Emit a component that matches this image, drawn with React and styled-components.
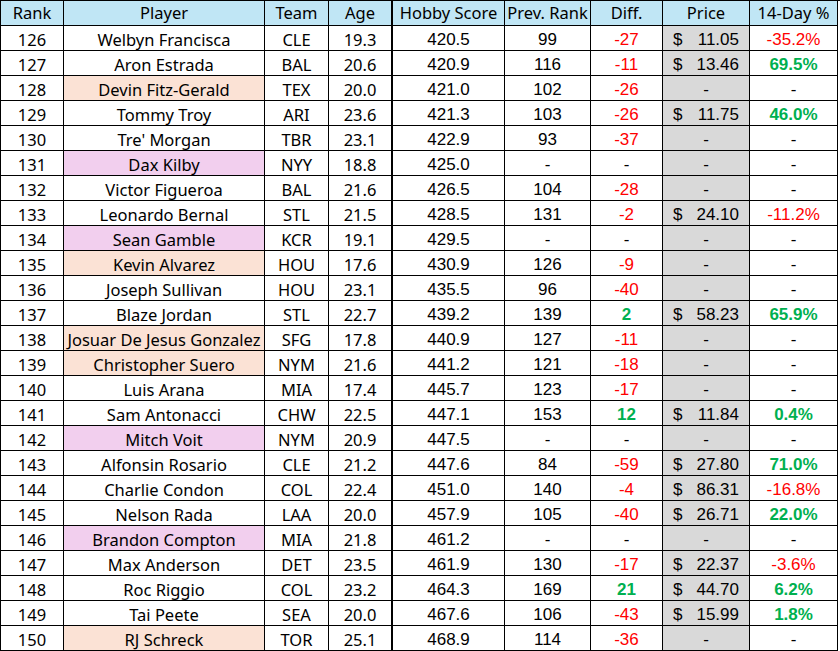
import React from "react";
import styled, { createGlobalStyle } from "styled-components";

const GlobalStyle = createGlobalStyle`
  body {
    margin: 0;
    background: #ffffff;
  }
`;

// rank, player, fill, team, age, hobby score, prev rank, diff, price, 14-day
const rows = [
  [126, "Welbyn Francisca", "", "CLE", "19.3", "420.5", "99", -27, "11.05", "-35.2%"],
  [127, "Aron Estrada", "", "BAL", "20.6", "420.9", "116", -11, "13.46", "69.5%"],
  [128, "Devin Fitz-Gerald", "orange", "TEX", "20.0", "421.0", "102", -26, null, null],
  [129, "Tommy Troy", "", "ARI", "23.6", "421.3", "103", -26, "11.75", "46.0%"],
  [130, "Tre' Morgan", "", "TBR", "23.1", "422.9", "93", -37, null, null],
  [131, "Dax Kilby", "purple", "NYY", "18.8", "425.0", null, null, null, null],
  [132, "Victor Figueroa", "", "BAL", "21.6", "426.5", "104", -28, null, null],
  [133, "Leonardo Bernal", "", "STL", "21.5", "428.5", "131", -2, "24.10", "-11.2%"],
  [134, "Sean Gamble", "purple", "KCR", "19.1", "429.5", null, null, null, null],
  [135, "Kevin Alvarez", "orange", "HOU", "17.6", "430.9", "126", -9, null, null],
  [136, "Joseph Sullivan", "", "HOU", "23.1", "435.5", "96", -40, null, null],
  [137, "Blaze Jordan", "", "STL", "22.7", "439.2", "139", 2, "58.23", "65.9%"],
  [138, "Josuar De Jesus Gonzalez", "orange", "SFG", "17.8", "440.9", "127", -11, null, null],
  [139, "Christopher Suero", "orange", "NYM", "21.6", "441.2", "121", -18, null, null],
  [140, "Luis Arana", "", "MIA", "17.4", "445.7", "123", -17, null, null],
  [141, "Sam Antonacci", "", "CHW", "22.5", "447.1", "153", 12, "11.84", "0.4%"],
  [142, "Mitch Voit", "purple", "NYM", "20.9", "447.5", null, null, null, null],
  [143, "Alfonsin Rosario", "", "CLE", "21.2", "447.6", "84", -59, "27.80", "71.0%"],
  [144, "Charlie Condon", "", "COL", "22.4", "451.0", "140", -4, "86.31", "-16.8%"],
  [145, "Nelson Rada", "", "LAA", "20.0", "457.9", "105", -40, "26.71", "22.0%"],
  [146, "Brandon Compton", "purple", "MIA", "21.8", "461.2", null, null, null, null],
  [147, "Max Anderson", "", "DET", "23.5", "461.9", "130", -17, "22.37", "-3.6%"],
  [148, "Roc Riggio", "", "COL", "23.2", "464.3", "169", 21, "44.70", "6.2%"],
  [149, "Tai Peete", "", "SEA", "20.0", "467.6", "106", -43, "15.99", "1.8%"],
  [150, "RJ Schreck", "orange", "TOR", "25.1", "468.9", "114", -36, null, null],
];

const headers = ["Rank", "Player", "Team", "Age", "Hobby Score", "Prev. Rank", "Diff.", "Price", "14-Day %"];

const fills = {
  orange: "#fbe2d5",
  purple: "#f2cfee",
  header: "#c0e6f5",
  gray: "#d9d9d9",
};

const red = "#ff0000";
const green = "#00b050";

const Sheet = styled.div`
  width: 839px;
  border-top: 1px solid #000;
  border-left: 1px solid #000;
`;

const Row = styled.div`
  display: grid;
  grid-template-columns: 63px 201px 64px 64px 112px 86px 72px 87px 88px;
`;

const Cell = styled.div`
  box-sizing: border-box;
  height: 25px;
  border-right: ${(p) => (p.$thick ? "2px" : "1px")} solid #000;
  border-bottom: 1px solid #000;
  display: flex;
  align-items: flex-end;
  justify-content: center;
  padding-bottom: 0;
  font-family: ${(p) =>
    p.$arial ? `"Liberation Sans", Arial, sans-serif` : `"Noto Sans", "Open Sans", sans-serif`};
  font-size: ${(p) => (p.$arial ? "17px" : "16.5px")};
  line-height: 20px;
  white-space: nowrap;
  overflow: hidden;
  color: ${(p) => p.$color || "#000"};
  font-weight: ${(p) => (p.$bold ? 700 : 400)};
  background: ${(p) => (p.$fill ? fills[p.$fill] : "transparent")};
`;

const HeadCell = styled(Cell)`
  background: ${fills.header};
  padding-bottom: 2px;
`;

const PriceCell = styled(Cell)`
  background: ${fills.gray};
  justify-content: ${(p) => (p.$empty ? "center" : "space-between")};
  padding-left: ${(p) => (p.$empty ? "0" : "10px")};
  padding-right: ${(p) => (p.$empty ? "0" : "10px")};
`;

function DiffCell({ value }) {
  if (value === null) return <Cell $arial>-</Cell>;
  return (
    <Cell $arial $color={value < 0 ? red : green} $bold={value > 0}>
      {value}
    </Cell>
  );
}

function PctCell({ value }) {
  if (value === null) return <Cell $arial>-</Cell>;
  const neg = value.startsWith("-");
  return (
    <Cell $arial $color={neg ? red : green} $bold={!neg}>
      {value}
    </Cell>
  );
}

function Price({ value }) {
  if (value === null) {
    return (
      <PriceCell $arial $empty>
        -
      </PriceCell>
    );
  }
  return (
    <PriceCell $arial>
      <span>$</span>
      <span>{value}</span>
    </PriceCell>
  );
}

export default function App() {
  return (
    <>
      <GlobalStyle />
      <Sheet>
        <Row>
          {headers.map((h, i) => (
            <HeadCell key={h} $thick={i === 3}>
              {h}
            </HeadCell>
          ))}
        </Row>
        {rows.map((r) => {
          const [rank, name, fill, team, age, score, prev, diff, price, pct] = r;
          return (
            <Row key={rank}>
              <Cell>{rank}</Cell>
              <Cell $fill={fill}>{name}</Cell>
              <Cell>{team}</Cell>
              <Cell $thick>{age}</Cell>
              <Cell $arial>{score}</Cell>
              <Cell $arial>{prev === null ? "-" : prev}</Cell>
              <DiffCell value={diff} />
              <Price value={price} />
              <PctCell value={pct} />
            </Row>
          );
        })}
      </Sheet>
    </>
  );
}
